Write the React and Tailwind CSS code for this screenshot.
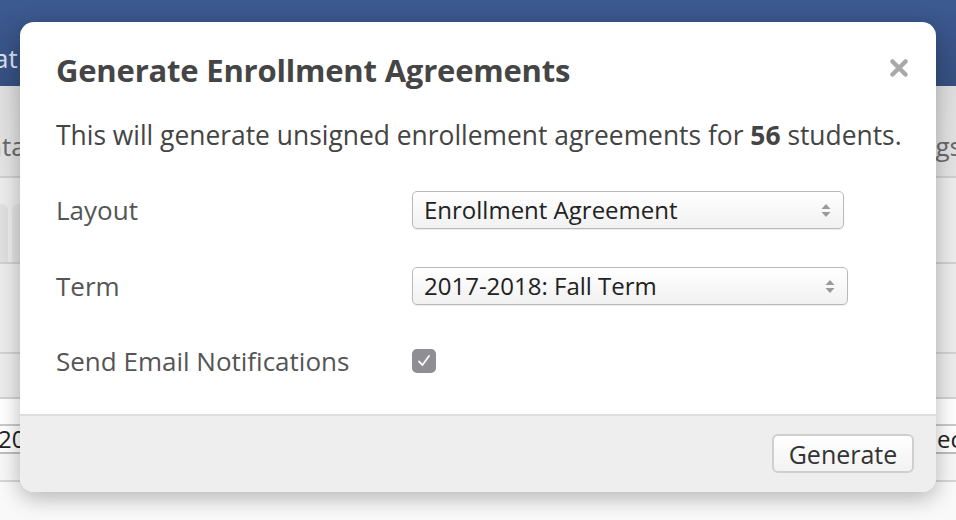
import React from 'react';

const font = { fontFamily: '"Open Sans", "Liberation Sans", sans-serif' };

const Arrows = () => (
  <svg width="10" height="15" viewBox="0 0 10 15" className="shrink-0">
    <path d="M5 1 L9.5 6 L0.5 6 Z" fill="#9a9a9a" />
    <path d="M5 14 L9.5 9 L0.5 9 Z" fill="#9a9a9a" />
  </svg>
);

const FakeSelect = ({ value, width }) => (
  <div
    className={`flex items-center justify-between h-[38px] pl-[11px] pr-[12px] rounded-[5px] border border-[#b9b9b9] bg-gradient-to-b from-white to-[#f1f1f1] shadow-[0_1px_1px_rgba(0,0,0,0.08)] text-[24px] leading-[30px] text-[#222] ${width}`}>
    <span>{value}</span>
    <Arrows />
  </div>
);

const Background = () => (
  <div className="h-[520px] w-full flex flex-col bg-[#ececec] text-[26px] leading-[32px]">
    <div className="h-[86px] bg-gradient-to-b from-[#3c5a91] to-[#364f80] flex items-end pb-[12px]">
      <span className="-ml-[6px] text-[#dbe2ee]">at</span>
    </div>
    <div className="h-[92px] bg-gradient-to-b from-[#dedede] to-[#e4e4e4] border-b-2 border-[#cfcfcf] flex items-end justify-between pb-[14px] text-[#6a6a6a]">
      <span className="-ml-[14px]">nta</span>
      <span className="-mr-[6px]">gs</span>
    </div>
    <div className="h-[86px] border-b-2 border-[#d0d0d0] flex items-end gap-[4px]">
      <div className="h-[58px] w-[8px] bg-[#e0e0e0] rounded-tr-[6px]" />
      <div className="h-[58px] w-[40px] bg-[#e2e2e2] rounded-t-[6px]" />
    </div>
    <div className="h-[90px] border-b-2 border-[#d2d2d2]" />
    <div className="h-[45px] border-b-2 border-[#d2d2d2]" />
    <div className="h-[27px] border-b-2 border-[#c9c9c9] bg-white" />
    <div className="h-[28px] border-b-2 border-[#bdbdbd] bg-white flex items-center justify-between text-[#222] text-[24px]">
      <span className="-ml-[2px]">20</span>
      <span className="-mr-[6px]">ec</span>
    </div>
    <div className="h-[28px] border-b-2 border-[#d5d5d5] bg-[#f7f7f7]" />
    <div className="flex-1 bg-[#f9f9f9]" />
  </div>
);

const App = () => (
  <div className="relative w-[956px] h-[520px] overflow-hidden" style={font}>
    <Background />
    <div className="absolute left-[20px] top-[22px] w-[916px] h-[470px] rounded-[14px] bg-white shadow-[0_6px_22px_rgba(0,0,0,0.28)] flex flex-col overflow-hidden">
      <div className="flex-1 pl-[36px] pr-[28px] pt-[30px]">
        <div className="flex items-start justify-between">
          <h1 className="text-[31px] leading-[36px] font-bold text-[#454545] tracking-[-0.2px]">
            Generate Enrollment Agreements
          </h1>
          <svg width="18" height="18" viewBox="0 0 18 18" className="mt-[7px]">
            <path d="M2.5 2.5 L15.5 15.5 M15.5 2.5 L2.5 15.5" stroke="#a9a9a9" strokeWidth="4.5" strokeLinecap="round" />
          </svg>
        </div>
        <p className="mt-[30px] text-[26.4px] leading-[34px] text-[#444]">
          This will generate unsigned enrollement agreements for{' '}
          <span className="font-bold">56</span> students.
        </p>
        <div className="mt-[39px] grid grid-cols-[356px_1fr] items-center text-[26px] leading-[34px] text-[#555]">
          <span>Layout</span>
          <FakeSelect value="Enrollment Agreement" width="w-[432px]" />
        </div>
        <div className="mt-[38px] grid grid-cols-[356px_1fr] items-center text-[26px] leading-[34px] text-[#555]">
          <span>Term</span>
          <FakeSelect value="2017-2018: Fall Term" width="w-[436px]" />
        </div>
        <div className="mt-[39px] grid grid-cols-[356px_1fr] items-center text-[26px] leading-[34px] text-[#555]">
          <span>Send Email Notifications</span>
          <div className="w-[24px] h-[24px] rounded-[5px] bg-[#8e8e93] flex items-center justify-center">
            <svg width="18" height="18" viewBox="0 0 18 18">
              <path d="M4 9.5 L7.5 13 L14 4" fill="none" stroke="white" strokeWidth="1.8" strokeLinecap="round" strokeLinejoin="round" />
            </svg>
          </div>
        </div>
      </div>
      <div className="h-[78px] border-t-2 border-[#dddddd] bg-[#eeeeee] flex items-start justify-end pt-[18px] pr-[22px]">
        <button className="h-[39px] w-[142px] rounded-[6px] border-2 border-[#cfcfcf] bg-gradient-to-b from-white to-[#f2f2f2] text-[25px] leading-[30px] text-[#333]">
          Generate
        </button>
      </div>
    </div>
  </div>
);

export default App;
